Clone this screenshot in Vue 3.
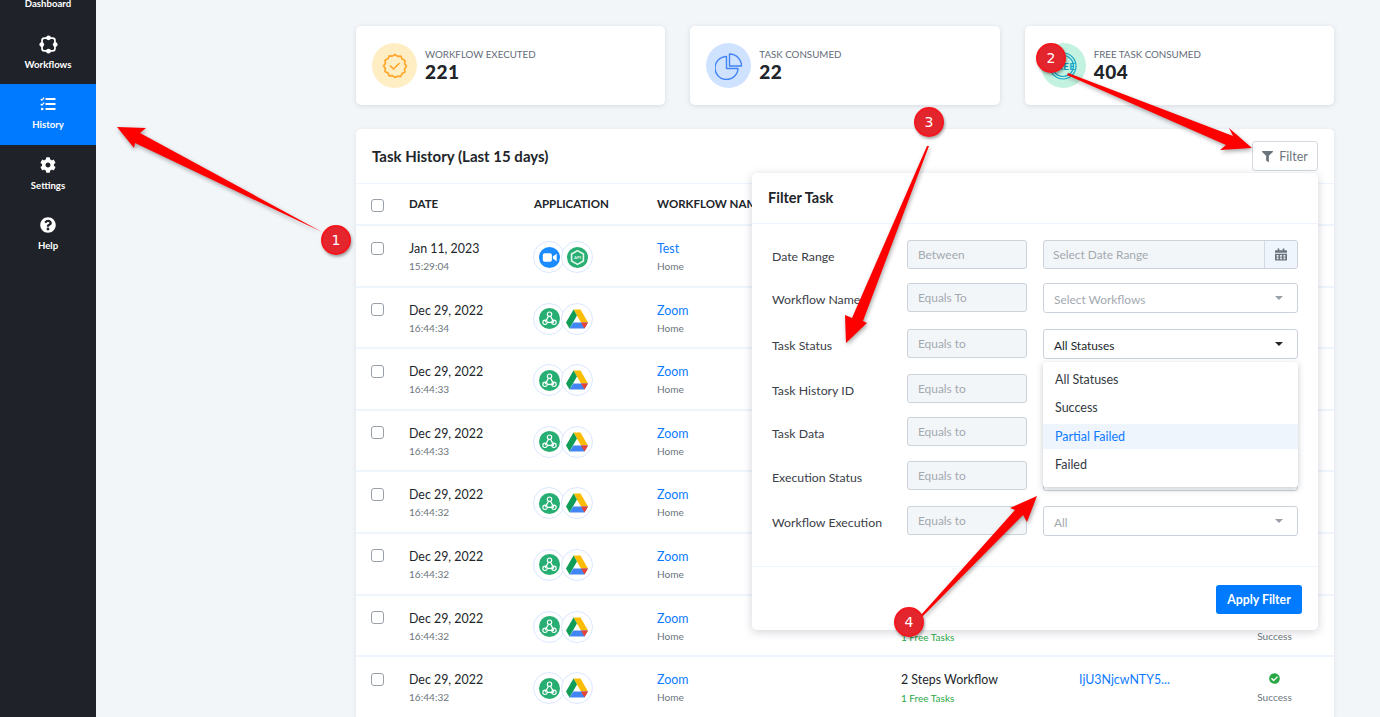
<template>
  <div class="page">
    <!-- Sidebar -->
    <aside class="sidebar">
      <a v-for="item in navItems" :key="item.label" class="nav-item" :class="{ active: item.active }">
        <svg v-if="item.icon === 'dashboard'" class="nav-icon" viewBox="0 0 20 20"><rect x="3" y="3" width="14" height="14" fill="#fff" /></svg>
        <svg v-else-if="item.icon === 'workflows'" class="nav-icon nav-icon--lg" viewBox="0 0 20 20">
          <rect x="3.2" y="3.2" width="13.6" height="13.6" rx="2.5" fill="none" stroke="#fff" stroke-width="1.8" />
          <circle cx="10" cy="2.9" r="2.5" fill="#fff" />
          <circle cx="10" cy="17.1" r="2.5" fill="#fff" />
          <circle cx="2.9" cy="10" r="2.5" fill="#fff" />
          <circle cx="17.1" cy="10" r="2.5" fill="#fff" />
        </svg>
        <svg v-else-if="item.icon === 'history'" class="nav-icon" viewBox="0 0 16 16">
          <rect x="5.5" y="2" width="10" height="2" rx=".5" fill="#fff" />
          <rect x="5.5" y="7" width="10" height="2" rx=".5" fill="#fff" />
          <rect x="5.5" y="12" width="10" height="2" rx=".5" fill="#fff" />
          <path d="M.8 3l1.1 1.1L4.2 1.6" fill="none" stroke="#fff" stroke-width="1.2" />
          <path d="M.8 8l1.1 1.1L4.2 6.6" fill="none" stroke="#fff" stroke-width="1.2" />
          <circle cx="2.2" cy="13" r="1.3" fill="#fff" />
        </svg>
        <svg v-else-if="item.icon === 'settings'" class="nav-icon" viewBox="0 0 512 512">
          <path fill="#fff" d="M487.4 315.7l-42.6-24.6c4.3-23.2 4.3-47 0-70.2l42.6-24.6c4.9-2.8 7.1-8.6 5.5-14-11.1-35.6-30-67.8-54.7-94.6-3.8-4.1-10-5.1-14.8-2.3L380.8 110c-17.9-15.4-38.5-27.3-60.8-35.1V25.8c0-5.6-3.9-10.5-9.4-11.7-36.7-8.2-74.3-7.8-109.2 0-5.5 1.2-9.4 6.1-9.4 11.7V75c-22.2 7.9-42.8 19.8-60.8 35.1L88.7 85.5c-4.9-2.8-11-1.9-14.8 2.3-24.7 26.7-43.6 58.9-54.7 94.6-1.7 5.4.6 11.2 5.5 14L67.3 221c-4.3 23.2-4.3 47 0 70.2l-42.6 24.6c-4.9 2.8-7.1 8.6-5.5 14 11.1 35.6 30 67.8 54.7 94.6 3.8 4.1 10 5.1 14.8 2.3l42.6-24.6c17.9 15.4 38.5 27.3 60.8 35.1v49.2c0 5.6 3.9 10.5 9.4 11.7 36.7 8.2 74.3 7.8 109.2 0 5.5-1.2 9.4-6.1 9.4-11.7v-49.2c22.2-7.9 42.8-19.8 60.8-35.1l42.6 24.6c4.9 2.8 11 1.9 14.8-2.3 24.7-26.7 43.6-58.9 54.7-94.6 1.5-5.5-.7-11.3-5.6-14.1zM256 336c-44.1 0-80-35.9-80-80s35.9-80 80-80 80 35.9 80 80-35.9 80-80 80z" />
        </svg>
        <svg v-else class="nav-icon" viewBox="0 0 512 512">
          <path fill="#fff" d="M504 256c0 136.997-111.043 248-248 248S8 392.997 8 256C8 119.083 119.043 8 256 8s248 111.083 248 248zM262.655 90c-54.497 0-89.255 22.957-116.549 63.758-3.536 5.286-2.353 12.415 2.715 16.258l34.699 26.31c5.205 3.947 12.621 3.008 16.665-2.122 17.864-22.658 30.113-35.797 57.303-35.797 20.429 0 45.698 13.148 45.698 32.958 0 14.976-12.363 22.667-32.534 33.976C247.128 238.528 216 254.941 216 296v4c0 6.627 5.373 12 12 12h56c6.627 0 12-5.373 12-12v-1.333c0-28.462 83.186-29.647 83.186-106.667 0-58.002-60.165-102-116.531-102zM256 338c-25.365 0-46 20.635-46 46 0 25.364 20.635 46 46 46s46-20.636 46-46c0-25.365-20.635-46-46-46z" />
        </svg>
        <span class="nav-label">{{ item.label }}</span>
      </a>
    </aside>

    <main class="content">
      <!-- Stat cards -->
      <section class="stats">
        <div class="stat-card">
          <span class="stat-icon stat-icon--orange">
            <svg viewBox="0 0 26 26" width="26" height="26" fill="none" stroke="#ffa62b" stroke-width="1.7">
              <path d="M13 1.5l2.6 1.9 3.2-.3 1.3 3 2.9 1.4-.4 3.2 1.9 2.6-1.9 2.6.4 3.2-2.9 1.4-1.3 3-3.2-.3L13 24.5l-2.6-1.9-3.2.3-1.3-3-2.9-1.4.4-3.2L1.5 13l1.9-2.6-.4-3.2 2.9-1.4 1.3-3 3.2.3z" stroke-linejoin="round" />
              <path d="M8.5 13l3 3 5.5-5.5" stroke-linecap="round" stroke-linejoin="round" />
            </svg>
          </span>
          <div class="stat-text">
            <div class="stat-label">WORKFLOW EXECUTED</div>
            <div class="stat-value">221</div>
          </div>
        </div>
        <div class="stat-card">
          <span class="stat-icon stat-icon--blue">
            <svg viewBox="0 0 28 28" width="28" height="28" fill="none" stroke="#4285f4" stroke-width="1.4">
              <path d="M11.5 4.500A11.500 11.500 0 1 0 23 16.500H11.500z" stroke-linejoin="round" />
              <path d="M14.500 2A12 12 0 0 1 26.500 14H14.500z" stroke-linejoin="round" />
            </svg>
          </span>
          <div class="stat-text">
            <div class="stat-label">TASK CONSUMED</div>
            <div class="stat-value">22</div>
          </div>
        </div>
        <div class="stat-card">
          <span class="stat-icon stat-icon--green">
            <svg viewBox="0 0 30 30" width="30" height="30" fill="none" stroke="#16a5c6" stroke-width="1.2">
              <circle cx="15" cy="15" r="13" />
              <circle cx="15" cy="15" r="10.5" />
              <text x="15" y="18.5" text-anchor="middle" class="free-text">FREE</text>
            </svg>
          </span>
          <div class="stat-text">
            <div class="stat-label">FREE TASK CONSUMED</div>
            <div class="stat-value">404</div>
          </div>
        </div>
      </section>

      <!-- Task history -->
      <section class="history">
        <header class="history-head">
          <h2 class="history-title">Task History (Last 15 days)</h2>
          <button class="filter-btn">
            <svg viewBox="0 0 512 512" width="11" height="11"><path fill="#6c757d" d="M487.976 0H24.028C2.71 0-8.047 25.866 7.058 40.971L192 225.941V432c0 7.831 3.821 15.17 10.237 19.662l80 55.98C298.02 518.69 320 507.493 320 487.98V225.941l184.947-184.97C520.021 25.896 509.338 0 487.976 0z" /></svg>
            Filter
          </button>
        </header>

        <div class="row row--head">
          <span class="checkbox"></span>
          <span>DATE</span>
          <span>APPLICATION</span>
          <span>WORKFLOW NAME</span>
        </div>

        <div v-for="(row, i) in rows" :key="i" class="row">
          <span class="checkbox"></span>
          <div>
            <div class="cell-main">{{ row.date }}</div>
            <div class="cell-sub">{{ row.time }}</div>
          </div>
          <div class="apps">
            <span class="app">
              <svg v-if="row.first === 'zoom'" viewBox="0 0 22 22" width="21" height="21">
                <circle cx="11" cy="11" r="11" fill="#1a8cff" />
                <rect x="4" y="6.500" width="9.500" height="9" rx="1.800" fill="#fff" />
                <path d="M14.500 10l4-3v8l-4-3z" fill="#fff" />
              </svg>
              <svg v-else viewBox="0 0 22 22" width="21" height="21">
                <circle cx="11" cy="11" r="11" fill="#27ae72" />
                <g fill="none" stroke="#fff" stroke-width="1.200">
                  <circle cx="11" cy="6.500" r="2.300" />
                  <circle cx="6.300" cy="15" r="2.300" />
                  <circle cx="15.700" cy="15" r="2.300" />
                  <path d="M10 8.500l-3.500 6.300M8.600 15h7M12 8.500l3.500 6.300" />
                </g>
              </svg>
            </span>
            <span class="app app--second">
              <svg v-if="row.second === 'api'" viewBox="0 0 22 22" width="21" height="21">
                <circle cx="11" cy="11" r="11" fill="#27ae72" />
                <path d="M11 3.800l6.200 3.600v7.200L11 18.200l-6.200-3.600V7.400z" fill="none" stroke="#e3f6ec" stroke-width="1.700" />
                <text x="11" y="12.600" text-anchor="middle" class="api-text">API</text>
              </svg>
              <svg v-else viewBox="0 0 22 20" width="22" height="20">
                <path d="M7.500 0.500h7L22 13.500h-7z" fill="#fbbc04" />
                <path d="M7.500 0.500L0 13.500l3.500 6L11 6.500z" fill="#0f9d58" />
                <path d="M7.300 13.500H22l-3.500 6H3.500z" fill="#4285f4" />
                <path d="M22 13.500l-3.500 6-3.500-6z" fill="#ea4335" />
              </svg>
            </span>
          </div>
          <div>
            <div class="cell-main link">{{ row.workflow }}</div>
            <div class="cell-sub">Home</div>
          </div>
          <div>
            <div class="cell-main">2 Steps Workflow</div>
            <div class="cell-free">1 Free Tasks</div>
          </div>
          <div class="cell-main link">IjU3NjcwNTY5...</div>
          <div class="status">
            <svg viewBox="0 0 512 512" width="11" height="11"><path fill="#28a745" d="M504 256c0 136.967-111.033 248-248 248S8 392.967 8 256 119.033 8 256 8s248 111.033 248 248zM227.314 387.314l184-184c6.248-6.248 6.248-16.379 0-22.627l-22.627-22.627c-6.248-6.249-16.379-6.249-22.628 0L216 308.118l-70.059-70.059c-6.248-6.248-16.379-6.248-22.628 0l-22.627 22.627c-6.248 6.248-6.248 16.379 0 22.627l104 104c6.249 6.249 16.379 6.249 22.628.001z" /></svg>
            <div class="cell-sub">Success</div>
          </div>
        </div>

        <!-- Filter panel -->
        <div class="filter-panel">
          <div class="panel-head">Filter Task</div>
          <div class="panel-body">
            <div v-for="field in fields" :key="field.label" class="field" :style="{ height: field.pitch + 'px' }">
              <label class="field-label">{{ field.label }}</label>
              <div class="box box--muted">{{ field.op }}</div>
              <div v-if="field.type === 'date'" class="box box--muted box--date">
                <span class="date-text">{{ field.value }}</span>
                <span class="date-addon">
                  <svg viewBox="0 0 14 14" width="12" height="13">
                    <path fill="#6c757d" d="M3 0h2v2h4V0h2v2h2a1 1 0 0 1 1 1v2H0V3a1 1 0 0 1 1-1h2zM0 6h14v7a1 1 0 0 1-1 1H1a1 1 0 0 1-1-1zm2 1.500v2h2v-2zm4 0v2h2v-2zm4 0v2h2v-2zm-8 3v2h2v-2zm4 0v2h2v-2zm4 0v2h2v-2z" />
                  </svg>
                </span>
              </div>
              <div v-else class="box box--select" :class="{ 'box--dark': field.dark }">
                {{ field.value }}
                <span class="caret"></span>
              </div>
            </div>

            <ul class="dropdown">
              <li v-for="option in statusOptions" :key="option" :class="{ hover: option === 'Partial Failed' }">{{ option }}</li>
            </ul>
          </div>
          <div class="panel-foot">
            <button class="apply-btn">Apply Filter</button>
          </div>
        </div>
      </section>
    </main>

    <!-- Annotation arrows drawn on top of the screenshot -->
    <svg class="arrows" viewBox="0 0 1380 717" width="1380" height="717">
      <polygon points="322,232 140,133 146,128 117,127 134,148 135,143" fill="#ff0000" />
      <polygon points="1068,73 1233,136 1229,128 1252,148 1220,150 1226,145 1067,75" fill="#ff0000" />
      <polygon points="929,146 863,321 867,323 846,343 845,315 852,318 927,146" fill="#ff0000" />
      <polygon points="923,616 1023,515 1027,522 1037,496 1010,508 1015,510 921,615" fill="#ff0000" />
    </svg>
    <span v-for="mark in marks" :key="mark.n" class="mark" :class="'mark--' + mark.n">{{ mark.n }}</span>
  </div>
</template>

<script setup>
const navItems = [
  { label: "Dashboard", icon: "dashboard" },
  { label: "Workflows", icon: "workflows" },
  { label: "History", icon: "history", active: true },
  { label: "Settings", icon: "settings" },
  { label: "Help", icon: "help" },
];

const rows = [
  { date: "Jan 11, 2023", time: "15:29:04", workflow: "Test", first: "zoom", second: "api" },
  { date: "Dec 29, 2022", time: "16:44:34", workflow: "Zoom", first: "webhook", second: "drive" },
  { date: "Dec 29, 2022", time: "16:44:33", workflow: "Zoom", first: "webhook", second: "drive" },
  { date: "Dec 29, 2022", time: "16:44:33", workflow: "Zoom", first: "webhook", second: "drive" },
  { date: "Dec 29, 2022", time: "16:44:32", workflow: "Zoom", first: "webhook", second: "drive" },
  { date: "Dec 29, 2022", time: "16:44:32", workflow: "Zoom", first: "webhook", second: "drive" },
  { date: "Dec 29, 2022", time: "16:44:32", workflow: "Zoom", first: "webhook", second: "drive" },
  { date: "Dec 29, 2022", time: "16:44:32", workflow: "Zoom", first: "webhook", second: "drive" },
];

const fields = [
  { label: "Date Range", op: "Between", type: "date", value: "Select Date Range", pitch: 43 },
  { label: "Workflow Name", op: "Equals To", value: "Select Workflows", pitch: 46 },
  { label: "Task Status", op: "Equals to", value: "All Statuses", dark: true, pitch: 45 },
  { label: "Task History ID", op: "Equals to", value: "", pitch: 43 },
  { label: "Task Data", op: "Equals to", value: "", pitch: 44 },
  { label: "Execution Status", op: "Equals to", value: "", pitch: 45 },
  { label: "Workflow Execution", op: "Equals to", value: "All", pitch: 30 },
];

const statusOptions = ["All Statuses", "Success", "Partial Failed", "Failed"];

const marks = [{ n: 1 }, { n: 2 }, { n: 3 }, { n: 4 }];
</script>

<style>
html,
body {
  margin: 0;
  overflow: hidden;
}
</style>

<style scoped>
.page {
  position: relative;
  display: flex;
  height: 717px;
  overflow: hidden;
  background: #f3f6f9;
  color: #212529;
  font-family: Lato, "Liberation Sans", sans-serif;
}

/* sidebar */
.sidebar {
  flex: 0 0 96px;
  background: #1f2329;
}

.nav-item {
  display: flex;
  flex-direction: column;
  align-items: center;
  box-sizing: border-box;
  height: 60px;
  padding-top: 11px;
  color: #fff;
}

/* page is scrolled a little, the first item is cut off */
.nav-item:first-child {
  height: 61px;
  margin-top: -37px;
}

.nav-item.active {
  height: 61px;
  background: #007bff;
}

.nav-icon {
  width: 16px;
  height: 16px;
  margin: 1px 0;
}

.nav-icon--lg {
  width: 19px;
  height: 19px;
  margin: 0 0 -1px;
}

.nav-label {
  margin-top: 4px;
  font-size: 9.6px;
  font-weight: 700;
  line-height: 16px;
}

/* content */
.content {
  flex: 1;
  min-width: 0;
  padding: 26px 46px 0 260px;
}

.stats {
  display: grid;
  grid-template-columns: repeat(3, 1fr);
  gap: 25px;
}

.stat-card {
  display: flex;
  align-items: center;
  gap: 8px;
  height: 79px;
  padding: 0 16px;
  background: #fff;
  border-radius: 5px;
  box-shadow: 0 1px 5px rgba(60, 70, 90, 0.16);
}

.stat-icon {
  display: flex;
  align-items: center;
  justify-content: center;
  flex: 0 0 45px;
  height: 45px;
  border-radius: 50%;
}

.stat-icon--orange {
  background: #ffedc4;
}

.stat-icon--blue {
  background: #cfe2ff;
}

.stat-icon--green {
  background: #c3f2e1;
}

.free-text {
  font-size: 10px;
  font-weight: 700;
  fill: #16a5c6;
  stroke: none;
  letter-spacing: 0.2px;
}

.api-text {
  font-size: 4.5px;
  font-weight: 700;
  fill: #e3f6ec;
}

.stat-text {
  margin-top: -2px;
}

.stat-label {
  font-size: 9.75px;
  line-height: 14px;
  color: #626b78;
}

.stat-value {
  font-size: 19px;
  font-weight: 900;
  line-height: 22px;
  letter-spacing: 0.5px;
}

.history {
  position: relative;
  margin-top: 24px;
  background: #fff;
  border-radius: 5px 5px 0 0;
  box-shadow: 0 1px 5px rgba(60, 70, 90, 0.1);
}

.history-head {
  display: flex;
  align-items: center;
  justify-content: space-between;
  height: 55px;
  padding: 0 16px;
  box-sizing: border-box;
  border-bottom: 1px solid #eef5fd;
}

.history-title {
  margin: 0;
  font-size: 15px;
  font-weight: 700;
}

.filter-btn {
  display: flex;
  align-items: center;
  justify-content: center;
  gap: 6px;
  width: 66px;
  height: 30px;
  padding: 0;
  background: #fff;
  border: 1px solid #d5dae1;
  border-radius: 3px;
  color: #6c757d;
  font-family: inherit;
  font-size: 12.5px;
}

.row {
  display: grid;
  grid-template-columns: 53px 125px 123px 244px 178px 137px 118px;
  box-sizing: border-box;
  height: 61.6px;
  padding-top: 14px;
  border-bottom: 2px solid #eef5fd;
}

.row--head {
  height: 42px;
  padding-top: 0;
  padding-bottom: 2px;
  align-items: center;
  font-size: 11.5px;
  font-weight: 700;
}

.checkbox {
  display: block;
  box-sizing: border-box;
  width: 13px;
  height: 13px;
  margin: 1.5px 0 0 15px;
  border: 1px solid #9aa0a8;
  border-radius: 3px;
}

.row--head .checkbox {
  margin-top: 5px;
}

.cell-main {
  font-size: 12.4px;
  line-height: 18px;
}

.cell-sub {
  margin-top: 1px;
  font-size: 10.1px;
  line-height: 14px;
  color: #6c757d;
}

.cell-free {
  margin-top: 2px;
  font-size: 10px;
  line-height: 14px;
  color: #28a745;
}

.link {
  color: #0d7bff;
}

.apps {
  display: flex;
  margin: 1px 0 0 -1px;
}

.app {
  display: flex;
  align-items: center;
  justify-content: center;
  box-sizing: border-box;
  width: 32px;
  height: 32px;
  background: #fff;
  border: 1px solid #dbe7ff;
  border-radius: 50%;
}

.app--second {
  margin-left: -4px;
}

.status {
  display: flex;
  flex-direction: column;
  align-items: center;
  padding: 2px 0 0;
  margin-left: -1px;
}

.status .cell-sub {
  margin-top: 6px;
}

/* filter panel */
.filter-panel {
  position: absolute;
  top: 44px;
  right: 16px;
  width: 566px;
  height: 457px;
  display: flex;
  flex-direction: column;
  background: #fff;
  border-radius: 5px;
  box-shadow: 0 2px 10px rgba(50, 60, 80, 0.22);
}

.panel-head {
  box-sizing: border-box;
  height: 51px;
  padding: 16px 16px 0;
  font-size: 14.5px;
  font-weight: 700;
  border-bottom: 1px solid #eef5fd;
}

.panel-body {
  position: relative;
  flex: 1;
  padding: 16px 20px 0;
  border-bottom: 1px solid #eef5fd;
}

.field {
  display: flex;
  align-items: flex-start;
  gap: 16px;
}

.field-label {
  flex: 0 0 119px;
  padding-top: 7.5px;
  font-size: 12.3px;
  line-height: 18px;
  color: #3a4048;
}

.box {
  box-sizing: border-box;
  height: 29px;
  padding: 0 10px;
  display: flex;
  align-items: center;
  border: 1px solid #ccd2da;
  border-radius: 3px;
  font-size: 11.9px;
  color: #a3a9b0;
}

.box--muted {
  width: 120px;
  padding-bottom: 1px;
  background: #f3f6f9;
}

.box--date {
  flex: 0 0 255px;
  padding: 0 0 1px 9px;
  justify-content: space-between;
}

.date-addon {
  display: flex;
  align-items: center;
  justify-content: center;
  width: 32px;
  height: 27px;
  margin-bottom: -1px;
  background: #eef5fd;
  border-left: 1px solid #d5dae1;
  border-radius: 0 3px 3px 0;
}

.box--select {
  position: relative;
  flex: 0 0 255px;
  height: 30px;
  padding-top: 2px;
  background: #fff;
}

.box--dark {
  color: #212529;
}

.caret {
  position: absolute;
  top: 12px;
  right: 14px;
  border: 4px solid transparent;
  border-top: 4px solid #9aa0a8;
  border-bottom: 0;
}

.box--dark .caret {
  border-top-color: #212529;
}

.dropdown {
  position: absolute;
  top: 138px;
  left: 291px;
  width: 255px;
  height: 125px;
  box-sizing: border-box;
  margin: 0;
  padding: 4px 0 0;
  list-style: none;
  background: #fff;
  border-radius: 3px;
  box-shadow: 0 2px 6px rgba(50, 60, 80, 0.28);
  font-size: 12.5px;
}

.dropdown li {
  height: 28px;
  padding-left: 12px;
  line-height: 28px;
  color: #333a42;
}

.dropdown li.hover {
  height: 25px;
  margin: 2px 0;
  line-height: 25px;
  background: #eef5fd;
  color: #0d7bff;
}

.panel-foot {
  display: flex;
  justify-content: flex-end;
  align-items: center;
  box-sizing: border-box;
  height: 63px;
  padding: 1px 16px 0;
}

.apply-btn {
  width: 86px;
  height: 29px;
  padding: 0;
  background: #007bff;
  border: none;
  border-radius: 3px;
  color: #fff;
  font-family: inherit;
  font-size: 12.3px;
  font-weight: 700;
}

/* annotations */
.arrows {
  position: absolute;
  top: 0;
  left: 0;
  filter: drop-shadow(1px 2px 2px rgba(0, 0, 0, 0.35));
}

.mark {
  position: absolute;
  display: flex;
  align-items: center;
  justify-content: center;
  box-sizing: border-box;
  width: 30px;
  height: 30px;
  background: #e3262e;
  border: 2px solid #f5161d;
  border-radius: 50%;
  box-shadow: 1px 2px 3px rgba(0, 0, 0, 0.35);
  color: #fff;
  font-family: "DejaVu Sans", sans-serif;
  font-size: 14px;
}

.mark--1 {
  top: 225px;
  left: 321px;
}

.mark--2 {
  top: 43px;
  left: 1036px;
}

.mark--3 {
  top: 107px;
  left: 914px;
}

.mark--4 {
  top: 607px;
  left: 894px;
}
</style>
